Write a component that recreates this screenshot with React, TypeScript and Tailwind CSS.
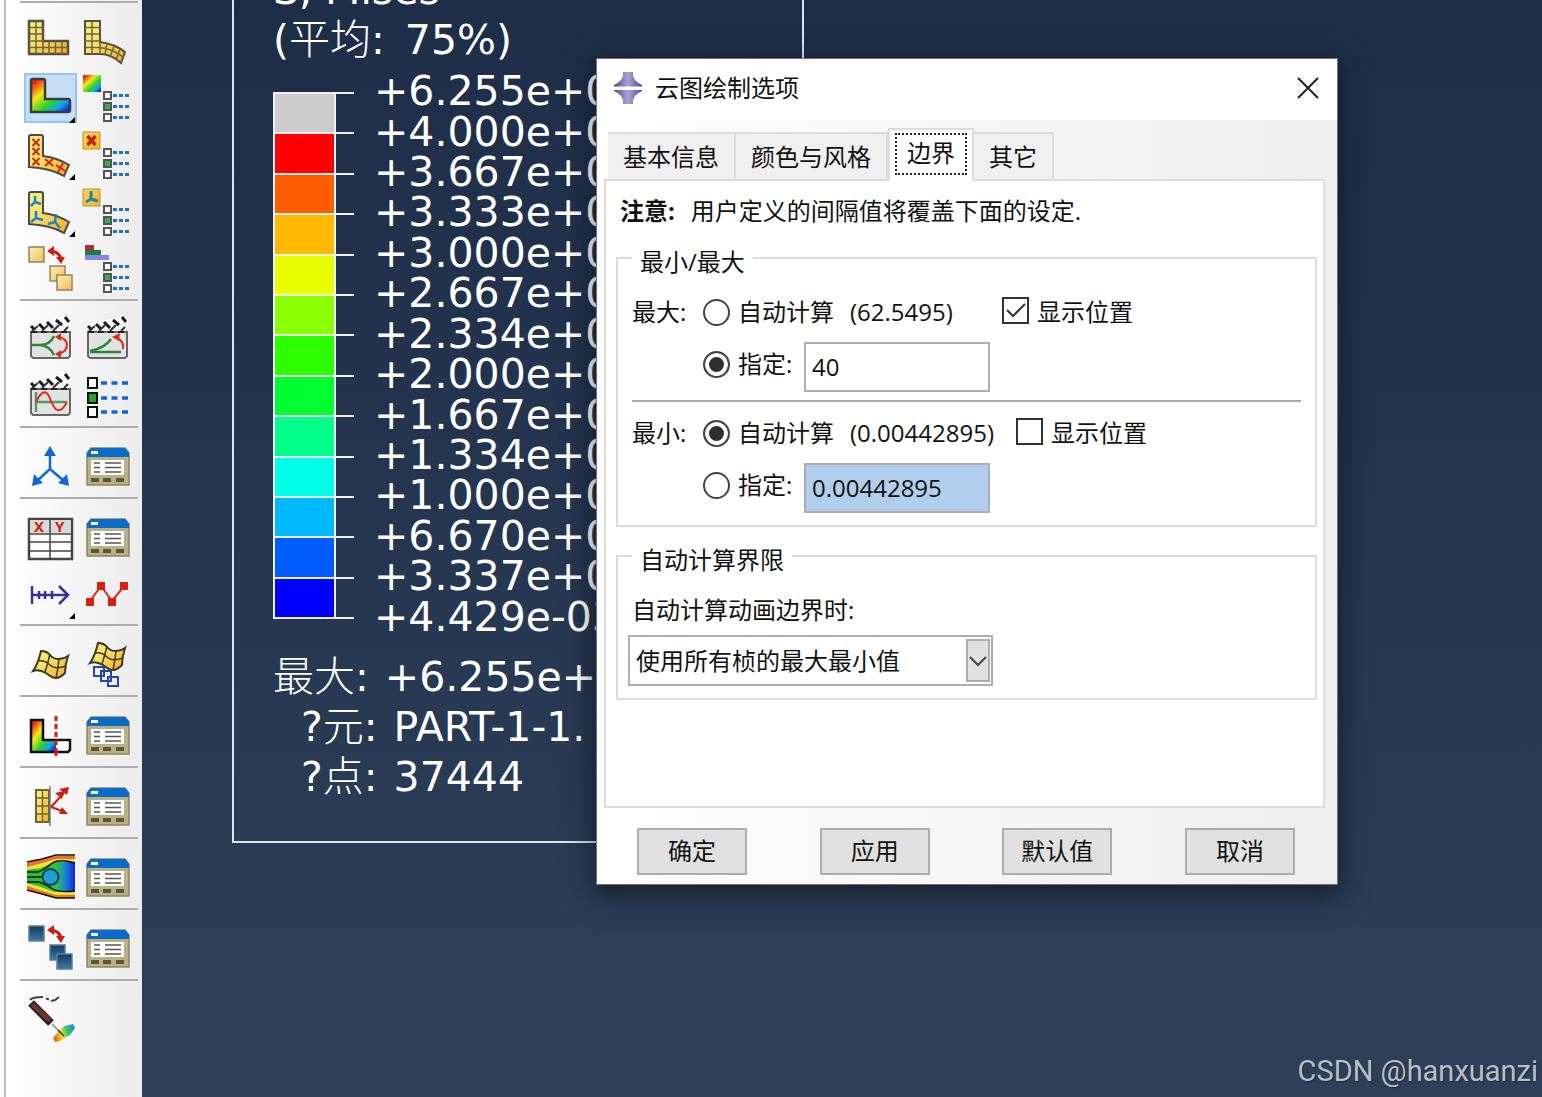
import { useState, type ReactNode } from "react";

const UI_FONT = "font-['Open_Sans','Noto_Sans_CJK_SC',sans-serif]";
const VIEW_FONT = "font-['DejaVu_Sans','Noto_Sans_CJK_SC',sans-serif]";

const BANDS = [
    "bg-[#cccccc]",
    "bg-[#ff0000]",
    "bg-[#ff5d00]",
    "bg-[#ffb900]",
    "bg-[#e8ff00]",
    "bg-[#8bff00]",
    "bg-[#2eff00]",
    "bg-[#00ff2e]",
    "bg-[#00ff8b]",
    "bg-[#00ffe8]",
    "bg-[#00b9ff]",
    "bg-[#005dff]",
    "bg-[#0000ff]",
];

const LEVELS = [
    "+6.255e+01",
    "+4.000e+01",
    "+3.667e+01",
    "+3.333e+01",
    "+3.000e+01",
    "+2.667e+01",
    "+2.334e+01",
    "+2.000e+01",
    "+1.667e+01",
    "+1.334e+01",
    "+1.000e+01",
    "+6.670e+00",
    "+3.337e+00",
    "+4.429e-03",
];

/* ---------- toolbar icons, all drawn on a 57 x 57 cell ---------- */

const BENT = "M7 8.500Q7 7 9 7H19Q21 7 21 9V28Q36 30 47 37L42 48Q28 40 7 39Z";

function Corner() {
    return <path d="M53 46V52H47Z" fill="#000" />;
}

function OptionList() {
    return (
        <g>
            <g fill="#fff" stroke="#555" strokeWidth="2">
                <path d="M25 21h7v7h-7z" />
                <path d="M25 32h7v7h-7z" fill="#35b04a" />
                <path d="M25 43h7v7h-7z" />
            </g>
            <g stroke="#1f6fc4" strokeWidth="3" strokeDasharray="4 2">
                <path d="M34 24.500h16M34 35.500h16M34 46.500h16" />
            </g>
        </g>
    );
}

function Mesh() {
    return (
        <g stroke="#6b6643" strokeWidth="1.500">
            <path d="M7 7H21V27H46V40H7Z" fill="url(#gold)" stroke="#55523f" strokeWidth="2.500" />
            <path
                d="M14 7V40M7 13.500H21M7 20H21M7 27H21M7 33.500H46M21 27V40M27 27V40M33.500 27V40M40 27V40"
                fill="none"
            />
        </g>
    );
}

function MeshBent() {
    return (
        <g stroke="#6b6643" strokeWidth="1.500">
            <path
                d="M6 7H21V28Q36 30 46 38L42 49Q32 40 21 40H6Z"
                fill="url(#gold)"
                stroke="#55523f"
                strokeWidth="2"
            />
            <path
                d="M13 7V40M6 13.500H21M6 20H21M6 27H21M6 33.500H21Q34 35 44 43M21 28V40M28 29L26 41M35 32L31 43M41 35L37 46"
                fill="none"
            />
        </g>
    );
}

function ContourL() {
    return (
        <g>
            <path
                d="M9 10Q9 8 11 8H21Q23 8 23 10V28H46Q48 28 48 30V39Q48 41 46 41H9Z"
                fill="url(#rainbow)"
                stroke="#3c3c3c"
                strokeWidth="2.500"
            />
            <Corner />
        </g>
    );
}

function SymbolL() {
    return (
        <g>
            <path d={BENT} fill="url(#gold)" stroke="#4a4a4a" strokeWidth="2" />
            <g stroke="#d2260f" strokeWidth="2">
                <path d="M10.500 11l7 7M17.500 11l-7 7M10.500 20l7 7M17.500 20l-7 7M10.500 30l7 7M17.500 30l-7 7M23 31l8 7M31 31l-8 7M34 37l9 6M41 35l-5 9" />
            </g>
            <Corner />
        </g>
    );
}

function TriadL() {
    return (
        <g>
            <path d={BENT} fill="url(#gold)" stroke="#4a4a4a" strokeWidth="2" />
            <g stroke="#2180d0" strokeWidth="2.500" fill="none">
                <path d="M13 11v6l-4 4M13 17l6 2M14 26v7l-5 4M14 33l7 2M34 29l-1 8-7 2M33 37l5 6" />
            </g>
            <Corner />
        </g>
    );
}

function Cubes({ blue }: { blue?: boolean }) {
    return (
        <g>
            <g
                fill={blue ? "url(#steel)" : "url(#amber)"}
                stroke={blue ? "#5b7f9c" : "#8f8560"}
                strokeWidth="1.500"
            >
                <path d="M7 5h15v15H7z" />
                <path d="M28 24h15v15H28z" />
                <path d="M35 33h15v15H35z" />
            </g>
            <path d="M29 9Q38 10 39 18" fill="none" stroke="#d01c0c" strokeWidth="3" />
            <path d="M25 9l7-5v10zM34 15h9l-4 7z" fill="#d01c0c" />
        </g>
    );
}

function ContourOptions() {
    return (
        <g>
            <path d="M4 4h18v17H4z" fill="url(#rainbow)" />
            <OptionList />
        </g>
    );
}

function SymbolOptions() {
    return (
        <g>
            <path d="M4 4h17v17H4z" fill="url(#amber2)" stroke="#b99428" strokeWidth="1" />
            <path d="M8.500 8l8 9M16.500 8l-8 9" stroke="#c92208" strokeWidth="3.500" />
            <OptionList />
        </g>
    );
}

function TriadOptions() {
    return (
        <g>
            <path d="M4 4h17v17H4z" fill="url(#amber2)" stroke="#b99428" strokeWidth="1" />
            <path d="M12 6v8l-5 3M12 14l7 2" stroke="#2180b8" strokeWidth="3" fill="none" />
            <OptionList />
        </g>
    );
}

function BarOptions() {
    return (
        <g>
            <path d="M6 3h9v5H6z" fill="#b52a3c" />
            <path d="M6 8h16v5H6z" fill="#1d8238" />
            <path d="M6 13h24v5H6z" fill="#8785e6" />
            <OptionList />
        </g>
    );
}

function Clapper({ children }: { children: ReactNode }) {
    return (
        <g>
            <path d="M9 20H48V44L46 46H11L9 44Z" fill="#e2e2e2" stroke="#666" strokeWidth="2" />
            <path d="M9 20H48" stroke="#222" strokeWidth="2" strokeDasharray="6 4" />
            <path d="M9 15L48 7" stroke="#fff" strokeWidth="6" />
            <path d="M9 14l4 4M17 12l5 5M25 10l6 6M34 8l6 5M43 5l4 5" stroke="#1c1c1c" strokeWidth="3" />
            <path d="M10 19l6-5M20 19l6-6M31 19l6-6M42 19l4-4" stroke="#333" strokeWidth="2" />
            {children}
        </g>
    );
}

function AnimateHarmonic() {
    return (
        <Clapper>
            <path d="M10 33H18Q28 33 32 24M18 33Q28 34 32 43" fill="none" stroke="#2e8740" strokeWidth="2.500" />
            <path d="M37 25Q45 27 45 33T37 42" fill="none" stroke="#df2a18" strokeWidth="2" />
            <path d="M33 25l6-4v8zM33 42l6-4v8z" fill="#df2a18" />
        </Clapper>
    );
}

function AnimateScale() {
    return (
        <Clapper>
            <path d="M11 40H42M11 39Q26 36 32 27" fill="none" stroke="#2e8740" strokeWidth="2.500" />
            <path d="M44 37Q45 29 38 26" fill="none" stroke="#df2a18" strokeWidth="2" />
            <path d="M33 25l8-4-1 8z" fill="#df2a18" />
        </Clapper>
    );
}

function AnimateTime() {
    return (
        <Clapper>
            <path d="M14 23V43M14 33H45" stroke="#5c9664" strokeWidth="2.500" />
            <path d="M14 33Q23 14 29 32Q36 50 45 33" fill="none" stroke="#df2a18" strokeWidth="2" />
        </Clapper>
    );
}

function AnimateOptions() {
    return (
        <g>
            <g fill="#fff" stroke="#111" strokeWidth="2">
                <path d="M9 9h9v10H9z" />
                <path d="M9 24h9v10H9z" fill="#27a030" />
                <path d="M9 38h9v10H9z" />
            </g>
            <path d="M22 14h27M22 29h27M22 43h27" stroke="#1265d2" strokeWidth="3.500" strokeDasharray="6 4.500" />
        </g>
    );
}

function Axes() {
    return (
        <g>
            <path d="M28 14V30L15 42M28 30L42 42" fill="none" stroke="#1268d6" strokeWidth="2.500" />
            <path d="M28 7l6 10H22zM10 47l2-12 9 9zM47 47l-2-12-9 9z" fill="#1268d6" />
        </g>
    );
}

function Manager() {
    return (
        <g>
            <path d="M8 14l4-5H46l4 5V46H8Z" fill="#b9b187" stroke="#8f8761" strokeWidth="1.500" />
            <path d="M8 18V14l4-5H46l4 5v4Z" fill="#0a6cc8" />
            <path d="M12 12h7v3h-7z" fill="#fff" />
            <path d="M12 21h33v15H12z" fill="#fff" />
            <path d="M15 24h6M15 28.500h6M15 33h6M26 24h16M26 28.500h16M26 33h16" stroke="#555" strokeWidth="1.500" />
            <path d="M12 39h8v4h-8zM24 39h8v4h-8zM37 39h8v4h-8z" fill="#5d552f" />
        </g>
    );
}

function XYTable() {
    return (
        <g>
            <path d="M7 9H50V49H7Z" fill="#fff" stroke="#444" strokeWidth="2.500" />
            <path d="M8 10H49V23H8Z" fill="#d9d9d9" />
            <path d="M28 9V49M7 24H50M7 32H50M7 41H50" stroke="#444" strokeWidth="1.500" />
            <text x="12" y="22" fontSize="15" fontWeight="700" fill="#d2200e">
                X
            </text>
            <text x="33" y="22" fontSize="15" fontWeight="700" fill="#d2200e">
                Y
            </text>
        </g>
    );
}

function PathLine() {
    return (
        <g>
            <g stroke="#38309a" strokeWidth="2.500" fill="none">
                <path d="M10 19V37M10 28H46M17 24v8M23 24v8M30 24v8" />
                <path d="M37 19L46 28L37 37" />
            </g>
            <Corner />
        </g>
    );
}

function Polyline() {
    return (
        <g>
            <path d="M11 34L22 19L33 34L46 18" fill="none" stroke="#d9311b" strokeWidth="2" />
            <path d="M7 31h8v8H7zM18 15h8v8h-8zM29 31h8v8h-8zM41 15h8v8h-8z" fill="#d9200e" />
        </g>
    );
}

function Sheet() {
    return (
        <g stroke="#3b3826" strokeWidth="2" fill="url(#gold)">
            <path d="M19 14Q25 14 28 18T37 22Q42 22 46 19Q43 28 43 36Q38 41 34 41T24 36Q17 32 11 34Q16 27 19 14Z" />
            <path d="M28 17Q26 26 23 35M37 22Q36 32 34 41M16 24Q23 23 28 28T44 29" fill="none" strokeWidth="1.500" />
        </g>
    );
}

function SheetCopies() {
    return (
        <g>
            <g transform="translate(0 -8)">
                <Sheet />
            </g>
            <path d="M15 30h10v9H15zM22 34h10v10H22zM29 40h10v9H29z" fill="none" stroke="#2545a8" strokeWidth="2" />
        </g>
    );
}

function ViewCut() {
    return (
        <g>
            <path d="M9 12H21V32H34V44H9Z" fill="url(#rainbow)" />
            <path d="M34 32H48V42L46 44H34" fill="#fff" />
            <path d="M9 12H21V32H48V42L46 44H9Z" fill="none" stroke="#111" strokeWidth="2.500" />
            <path d="M34 8V46" stroke="#d01c14" strokeWidth="3" strokeDasharray="5 3" />
            <path d="M31 44h6l-3 5z" fill="#d01c14" />
        </g>
    );
}

function FreeBody() {
    return (
        <g>
            <path d="M14 11H27V43H14Z" fill="url(#gold)" stroke="#6b6538" strokeWidth="2" />
            <path d="M20.500 11V43M14 19H27M14 27H27M14 35H27" stroke="#6b6538" strokeWidth="1.500" />
            <path d="M28 7V47" stroke="#777" strokeWidth="1.500" />
            <path d="M29 28L42 14M29 28L40 32" stroke="#cf1e0c" strokeWidth="2" />
            <path d="M47 8l-2 8-8-6zM42 12l-2 8-7-6zM46 35l-9 0 3-7z" fill="#cf1e0c" />
        </g>
    );
}

function Stream() {
    return (
        <g>
            <path d="M5 13L20 9L34 6H53V48H34L20 44L5 39Z" fill="#e9702a" />
            <path d="M5 17L20 13L34 9H53V45H34L20 41L5 36Z" fill="#f1e234" />
            <path d="M5 20L19 18L32 12H53V42H32L19 37L5 33Z" fill="url(#stream)" />
            <path
                d="M5 12L20 9L34 5H53M5 40L20 44L34 48H53M5 22H16Q22 20 29 14T53 13M5 32H16Q22 33 29 38T53 41"
                fill="none"
                stroke="#111"
                strokeWidth="1.500"
            />
            <path d="M5 27H20" stroke="#111" strokeWidth="1.500" />
            <circle cx="28.500" cy="27" r="8" fill="#1b9fd4" stroke="#123f4c" strokeWidth="2" />
        </g>
    );
}

function Brush() {
    return (
        <g>
            <path d="M8 8Q10 5 21 5M24 6.500l3 1M29 9l4-1 4-3" fill="none" stroke="#444" strokeWidth="2" />
            <path d="M9 11L29 31" stroke="#1d1a30" strokeWidth="8" />
            <path d="M10 12L28 29" stroke="#6b3826" strokeWidth="5" />
            <path d="M30 32L40 42" stroke="#888" strokeWidth="1.500" />
            <path d="M43 34L51 32L53 36L48 43L41 47L38 49L33 50L31 46L35 41L39 37Z" fill="url(#tip)" />
            <path d="M36 38l6 6" stroke="#333" strokeWidth="1.500" />
        </g>
    );
}

function IconDefs() {
    return (
        <svg className="absolute size-0" aria-hidden="true">
            <defs>
                <linearGradient id="gold" x1="0" y1="0" x2="1" y2="1">
                    <stop offset="0" stopColor="#f6f07e" />
                    <stop offset="0.400" stopColor="#f8e06a" />
                    <stop offset="1" stopColor="#f5a81f" />
                </linearGradient>
                <linearGradient id="amber" x1="0" y1="0" x2="1" y2="1">
                    <stop offset="0" stopColor="#fff0b8" />
                    <stop offset="1" stopColor="#f0bd55" />
                </linearGradient>
                <linearGradient id="amber2" x1="0" y1="0" x2="1" y2="1">
                    <stop offset="0" stopColor="#f4d860" />
                    <stop offset="1" stopColor="#f5b41e" />
                </linearGradient>
                <linearGradient id="steel" x1="0" y1="0" x2="0" y2="1">
                    <stop offset="0" stopColor="#13395f" />
                    <stop offset="1" stopColor="#3f79a5" />
                </linearGradient>
                <linearGradient id="rainbow" x1="0" y1="0" x2="1" y2="1">
                    <stop offset="0.100" stopColor="#ee2410" />
                    <stop offset="0.350" stopColor="#f7e71c" />
                    <stop offset="0.600" stopColor="#2bd32b" />
                    <stop offset="0.780" stopColor="#12a6e8" />
                    <stop offset="0.950" stopColor="#1422dc" />
                </linearGradient>
                <linearGradient id="stream" x1="0" y1="0" x2="1" y2="0">
                    <stop offset="0" stopColor="#28b83a" />
                    <stop offset="0.600" stopColor="#34c63a" />
                    <stop offset="0.800" stopColor="#1583d6" />
                    <stop offset="1" stopColor="#1c1ee0" />
                </linearGradient>
                <linearGradient id="tip" x1="0" y1="0.500" x2="1" y2="0.200">
                    <stop offset="0" stopColor="#f06a1c" />
                    <stop offset="0.350" stopColor="#f3dc28" />
                    <stop offset="0.600" stopColor="#2fcf6a" />
                    <stop offset="1" stopColor="#2b7fe0" />
                </linearGradient>
            </defs>
        </svg>
    );
}

type Tool = { name: string; icon: ReactNode; active?: boolean };

const manager = (name: string): Tool => ({ name, icon: <Manager /> });

const TOOL_GROUPS: Tool[][] = [
    [
        { name: "未变形图", icon: <Mesh /> },
        { name: "变形图", icon: <MeshBent /> },
        { name: "云图", icon: <ContourL />, active: true },
        { name: "云图选项", icon: <ContourOptions /> },
        { name: "符号图", icon: <SymbolL /> },
        { name: "符号选项", icon: <SymbolOptions /> },
        { name: "材料方向", icon: <TriadL /> },
        { name: "材料方向选项", icon: <TriadOptions /> },
        { name: "多图叠加", icon: <Cubes /> },
        { name: "通用选项", icon: <BarOptions /> },
    ],
    [
        { name: "动画: 谐波", icon: <AnimateHarmonic /> },
        { name: "动画: 缩放", icon: <AnimateScale /> },
        { name: "动画: 时间历程", icon: <AnimateTime /> },
        { name: "动画选项", icon: <AnimateOptions /> },
    ],
    [{ name: "坐标系", icon: <Axes /> }, manager("坐标系管理器")],
    [
        { name: "XY 数据", icon: <XYTable /> },
        manager("XY 数据管理器"),
        { name: "路径", icon: <PathLine /> },
        { name: "XY 曲线", icon: <Polyline /> },
    ],
    [
        { name: "场输出", icon: <Sheet /> },
        { name: "组合场输出", icon: <SheetCopies /> },
    ],
    [{ name: "视图切片", icon: <ViewCut /> }, manager("视图切片管理器")],
    [{ name: "自由体", icon: <FreeBody /> }, manager("自由体管理器")],
    [{ name: "流线", icon: <Stream /> }, manager("流线管理器")],
    [{ name: "叠加图", icon: <Cubes blue /> }, manager("叠加图管理器")],
    [{ name: "颜色刷", icon: <Brush /> }],
];

function Toolbar() {
    return (
        <aside className="flex w-[142px] shrink-0 border-r-2 border-[#9fa3aa] bg-[#fbfbfb] pl-1">
            <div className="flex-1 border-l-2 border-[#bdbdc6] bg-linear-to-r from-white to-[#ececec] pt-px pr-1 pl-[14px]">
                {TOOL_GROUPS.map((group, i) => (
                    <div
                        key={i}
                        className="grid min-h-[71px] grid-cols-[57px_57px] border-t-2 border-[#adadad] px-[2px] pt-[11px]"
                    >
                        {group.map((tool) => (
                            <button
                                key={tool.name}
                                type="button"
                                aria-label={tool.name}
                                className="h-[57px] w-[57px]"
                            >
                                <svg viewBox="0 0 57 57" className="block size-[57px]">
                                    {tool.active && (
                                        <path
                                            d="M3 3H54V51H3Z"
                                            fill="#c6def5"
                                            stroke="#94c6f2"
                                            strokeWidth="2"
                                        />
                                    )}
                                    {tool.icon}
                                </svg>
                            </button>
                        ))}
                    </div>
                ))}
            </div>
        </aside>
    );
}

function Legend() {
    return (
        <section
            className={`ml-[90px] w-[572px] border-x-2 border-b-2 border-[#dfe3ea] pb-[39px] pl-[39px] text-[41px] leading-[50px] whitespace-nowrap text-white ${VIEW_FONT}`}
        >
            <p className="-mt-[35px]">S, Mises</p>
            <p className="flex gap-5">
                <span>
                    (<span className="font-light">平均</span>:
                </span>
                <span>75%)</span>
            </p>
            <div className="mt-[6px] flex h-[566px]">
                <div className="mt-[21px] flex h-[527px] flex-col">
                    {BANDS.map((band) => (
                        <div key={band} className="flex flex-1">
                            <div className={`w-[63px] border-x-2 border-t-2 border-[#eef0f4] ${band}`} />
                            <div className="w-[18px] border-t-2 border-[#eef0f4]" />
                        </div>
                    ))}
                    <div className="w-[81px] border-t-2 border-[#eef0f4]" />
                </div>
                <ol className="ml-5 flex flex-col">
                    {LEVELS.map((level) => (
                        <li key={level} className="flex flex-1 items-center leading-10">
                            {level}
                        </li>
                    ))}
                </ol>
            </div>
            <dl className="mt-[15px]">
                <div className="flex gap-4">
                    <dt>
                        <span className="font-light">最大</span>:
                    </dt>
                    <dd>+6.255e+01</dd>
                </div>
                <div className="flex gap-4 pl-7">
                    <dt>
                        ?<span className="font-light">元</span>:
                    </dt>
                    <dd>PART-1-1.</dd>
                </div>
                <div className="flex gap-4 pl-7">
                    <dt>
                        ?<span className="font-light">点</span>:
                    </dt>
                    <dd>37444</dd>
                </div>
            </dl>
        </section>
    );
}

function Radio({
    name,
    label,
    checked,
    onSelect,
}: {
    name: string;
    label: string;
    checked: boolean;
    onSelect: () => void;
}) {
    return (
        <label className="flex items-center gap-2">
            <input
                type="radio"
                name={name}
                checked={checked}
                onChange={onSelect}
                className="size-[27px] appearance-none rounded-full border-2 border-[#444] bg-white checked:bg-[#2e2e2e] checked:shadow-[inset_0_0_0_4px_#fff]"
            />
            {label}
        </label>
    );
}

function LimitRows({
    title,
    auto,
    value,
    autoDefault,
    showDefault,
    valueWidth,
}: {
    title: string;
    auto: string;
    value: string;
    autoDefault: boolean;
    showDefault: boolean;
    valueWidth: string;
}) {
    const [isAuto, setIsAuto] = useState(autoDefault);
    const [text, setText] = useState(value);
    const [show, setShow] = useState(showDefault);

    return (
        <div role="radiogroup" aria-label={title}>
            <div className="flex h-[50px] items-center">
                <span className="w-[71px]">{title}:</span>
                <Radio name={title} label="自动计算" checked={isAuto} onSelect={() => setIsAuto(true)} />
                <span className={`ml-4 ${valueWidth}`}>({auto})</span>
                <label className="ml-4 flex items-center gap-2">
                    <span className="relative mb-1 size-[27px]">
                        <input
                            type="checkbox"
                            checked={show}
                            onChange={(e) => setShow(e.target.checked)}
                            className="block size-[27px] appearance-none border-2 border-[#333] bg-white"
                        />
                        {show && (
                            <svg
                                viewBox="0 0 27 27"
                                className="pointer-events-none absolute inset-0"
                                fill="none"
                                stroke="#333"
                                strokeWidth="2"
                            >
                                <path d="M5 13L11 19L23 7" />
                            </svg>
                        )}
                    </span>
                    显示位置
                </label>
            </div>
            <div className="mt-[5px] flex items-center pl-[71px]">
                <div className="w-[101px] pb-[6px]">
                    <Radio name={title} label="指定:" checked={!isAuto} onSelect={() => setIsAuto(false)} />
                </div>
                <input
                    type="text"
                    aria-label={`${title} 指定`}
                    value={text}
                    readOnly={isAuto}
                    onChange={(e) => setText(e.target.value)}
                    className={`h-[50px] w-[186px] border-2 border-[#abadb3] px-[6px] pb-[2px] outline-none ${
                        isAuto ? "bg-[#b1ceed]" : "bg-white"
                    }`}
                />
            </div>
        </div>
    );
}

const TABS = ["基本信息", "颜色与风格", "边界", "其它"];

function Tabs() {
    const [current, setCurrent] = useState("边界");

    return (
        <div role="tablist" className="flex items-end pl-1">
            {TABS.map((tab) =>
                tab === current ? (
                    <button
                        key={tab}
                        type="button"
                        role="tab"
                        aria-selected="true"
                        className="z-10 -mb-[2px] h-[53px] border-2 border-b-0 border-[#dcdcdc] bg-white px-[5px] pb-1"
                    >
                        <span className="block h-[42px] border-2 border-dotted border-[#222] px-[10px] leading-9">
                            {tab}
                        </span>
                    </button>
                ) : (
                    <button
                        key={tab}
                        type="button"
                        role="tab"
                        aria-selected="false"
                        onClick={() => setCurrent(tab)}
                        className="h-[47px] border-t-2 border-r-2 border-[#dcdcdc] bg-[#f0f0f0] px-[15px]"
                    >
                        {tab}
                    </button>
                ),
            )}
        </div>
    );
}

function ContourDialog() {
    return (
        <div
            role="dialog"
            aria-labelledby="dialog-title"
            className={`absolute top-[58px] left-[596px] w-[742px] border border-[#6b7280] bg-white text-[24px] leading-8 whitespace-nowrap text-[#111] shadow-[0_8px_28px_4px_rgba(0,0,0,0.450)] ${UI_FONT}`}
        >
            <header className="flex h-[61px] items-center pr-[17px] pb-1 pl-4">
                <svg viewBox="0 0 30 32" className="h-8 w-[30px]">
                    <path d="M10 0H20V4Q22 10 29 13V14.500H1V13Q8 10 10 4Z" fill="url(#logo)" />
                    <path d="M1 18H29V19Q22 22 20 28V32H10V28Q8 22 1 19Z" fill="url(#logo)" />
                    <defs>
                        <linearGradient id="logo">
                            <stop offset="0" stopColor="#4a469c" />
                            <stop offset="0.500" stopColor="#a7a6d6" />
                            <stop offset="1" stopColor="#4a469c" />
                        </linearGradient>
                    </defs>
                </svg>
                <h1 id="dialog-title" className="ml-3 flex-1">
                    云图绘制选项
                </h1>
                <button type="button" aria-label="关闭" className="size-6">
                    <svg viewBox="0 0 24 24" stroke="#222" strokeWidth="2">
                        <path d="M2 2L22 22M22 2L2 22" />
                    </svg>
                </button>
            </header>

            <div className="bg-linear-to-r from-white to-[#eeeeee] pt-2 pr-[12px] pb-[9px] pl-[7px]">
                <Tabs />
                <div role="tabpanel" className="border-2 border-[#dcdcdc] bg-white pt-[14px] pr-[6px] pb-[106px] pl-[10px]">
                    <p className="px-1">
                        <b className="mr-4">注意:</b>用户定义的间隔值将覆盖下面的设定.
                    </p>

                    <fieldset className="mt-[15px] border-2 border-[#dcdcdc] pr-[14px] pb-3 pl-3">
                        <legend className="ml-[2px] px-2 pt-2 leading-6">最小/最大</legend>
                        <div className="pt-[13px] pl-[2px]">
                            <LimitRows
                                title="最大"
                                auto="62.5495"
                                value="40"
                                autoDefault={false}
                                showDefault={true}
                                valueWidth="w-[136px]"
                            />
                            <hr className="mt-2 mb-[6px] border-t-2 border-[#a9a9a9]" />
                            <LimitRows
                                title="最小"
                                auto="0.00442895"
                                value="0.00442895"
                                autoDefault={true}
                                showDefault={false}
                                valueWidth="w-[150px]"
                            />
                        </div>
                    </fieldset>

                    <fieldset className="mt-[13px] border-2 border-[#dcdcdc] px-[10px] pb-3">
                        <legend className="ml-1 px-2 pt-2 leading-6">自动计算界限</legend>
                        <label htmlFor="auto-limits" className="mt-[22px] block pl-1">
                            自动计算动画边界时:
                        </label>
                        <div className="relative mt-[9px] w-[365px]">
                            <select
                                id="auto-limits"
                                className="block h-[51px] w-full appearance-none border-2 border-[#abadb3] bg-white px-[6px]"
                            >
                                <option>使用所有桢的最大最小值</option>
                            </select>
                            <span className="pointer-events-none absolute inset-y-1 right-[3px] flex w-6 items-center border-2 border-[#adadad] bg-[#e1e1e1]">
                                <svg viewBox="0 0 20 12" fill="none" stroke="#444" strokeWidth="2">
                                    <path d="M2 2L10 10L18 2" />
                                </svg>
                            </span>
                        </div>
                    </fieldset>
                </div>

                <div className="mt-5 flex justify-between pr-[30px] pl-[33px]">
                    {["确定", "应用", "默认值", "取消"].map((label) => (
                        <button
                            key={label}
                            type="button"
                            className="h-[47px] w-[110px] border-2 border-[#adadad] bg-[#e1e1e1] pb-[2px]"
                        >
                            {label}
                        </button>
                    ))}
                </div>
            </div>
        </div>
    );
}

export default function App() {
    return (
        <div className="relative flex min-h-screen overflow-hidden bg-linear-to-b from-[#1e2d48] to-[#2e4059]">
            <IconDefs />
            <Toolbar />
            <main className="flex-1">
                <Legend />
            </main>
            <ContourDialog />
            <p className="absolute right-1 bottom-2 font-['Roboto',sans-serif] text-[29px] leading-9 text-[#b9bfc8] [text-shadow:1px_1px_1px_#1c2636]">
                CSDN @hanxuanzi
            </p>
        </div>
    );
}
